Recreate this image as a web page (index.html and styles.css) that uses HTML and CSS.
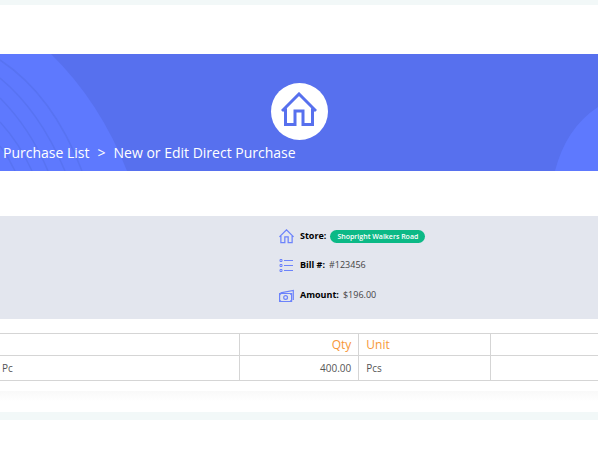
FILE: index.html
```html
<!DOCTYPE html>
<html lang="en">
<head>
<meta charset="utf-8">
<title>New or Edit Direct Purchase</title>
<link rel="stylesheet" href="styles.css">
</head>
<body>
<svg class="sprite" aria-hidden="true">
  <symbol id="home" viewBox="0 0 36 36">
    <path d="M1 19 18 2l17 17M4.500 16.500v16h9.500V19h8v13.500h9.500v-16" fill="none" stroke="currentColor"/>
  </symbol>
</svg>
<main class="page">
  <header class="hero">
    <svg class="swirl swirl-left" width="130" height="117" viewBox="0 0 130 117" aria-hidden="true">
      <path d="M0 0H51Q100 48 127 117H0Z" fill="#5e79fe"/>
      <g fill="none" stroke="#5873f2" stroke-width="1.500">
        <path d="M0 6Q53 41 82 117"/>
        <path d="M0 24Q40 57 65 117"/>
        <path d="M0 44Q30 74 48 117"/>
        <path d="M0 68Q20 90 32 117"/>
        <path d="M0 92Q9 104 15 117"/>
      </g>
    </svg>
    <svg class="swirl swirl-right" width="44" height="64" viewBox="0 0 44 64" aria-hidden="true">
      <path d="M44 0Q12 21 1 64H44Z" fill="#5e79fe"/>
    </svg>
    <div class="badge"><svg class="badge-icon" aria-hidden="true"><use href="#home"/></svg></div>
    <nav class="crumbs" aria-label="Breadcrumb">
      <a href="#list">Purchase List</a><span>&gt;</span><span>New or Edit Direct Purchase</span>
    </nav>
  </header>

  <section class="summary">
    <dl class="facts">
      <div class="fact">
        <svg class="icon icon-home" aria-hidden="true"><use href="#home"/></svg>
        <dt>Store:</dt><dd class="pill">Shopright Walkers Road</dd>
      </div>
      <div class="fact">
        <svg class="icon" viewBox="0 0 15 15" fill="none" stroke="currentColor" aria-hidden="true">
          <path d="M5 2.500h9M5 7.500h9M5 12.500h9" stroke-width="1.200"/>
          <path d="M1 1.500h2v2H1zM1 6.500h2v2H1zM1 11.500h2v2H1z"/>
        </svg>
        <dt>Bill #:</dt><dd>#123456</dd>
      </div>
      <div class="fact">
        <svg class="icon" viewBox="0 0 15 15" fill="none" stroke="currentColor" stroke-width="1.200" aria-hidden="true">
          <path d="M.6 5.500h12v8H.6zM1.500 4.800 14.300 2.500V12"/>
          <circle cx="6.600" cy="9.500" r="1.900"/>
          <path d="M.6 7.500l2-2M.6 11.500l2 2M12.600 7.500l-2-2M12.600 11.500l-2 2" stroke-width=".8"/>
        </svg>
        <dt>Amount:</dt><dd>$196.00</dd>
      </div>
    </dl>
  </section>

  <table class="items">
    <colgroup><col class="col-item"><col class="col-qty"><col class="col-unit"><col></colgroup>
    <thead><tr><th></th><th class="num">Qty</th><th>Unit</th><th></th></tr></thead>
    <tbody><tr><td>Pc</td><td class="num">400.00</td><td>Pcs</td><td></td></tr></tbody>
  </table>
  <div class="shade"></div>
</main>
</body>
</html>
```
FILE: styles.css
```css
* { box-sizing: border-box; }

body {
  margin: 0;
  background: #fff;
  color: #555;
  font-family: "Open Sans", "Noto Sans", sans-serif;
  font-size: 10px;
  line-height: 16px;
}

.sprite { position: absolute; width: 0; height: 0; }

.page {
  border-top: 5px solid #f2f8f8;
  border-bottom: 8px solid #f2f8f8;
  padding: 49px 0 10px;
}

.hero {
  position: relative;
  display: flex;
  flex-direction: column;
  align-items: center;
  padding: 29px 0 8px;
  background: #5770ee;
  color: #fff;
  overflow: hidden;
}

.swirl { position: absolute; bottom: 0; }
.swirl-left { left: 0; }
.swirl-right { right: 0; }

.badge {
  display: flex;
  justify-content: center;
  padding-top: 9px;
  width: 57px;
  height: 57px;
  border-radius: 50%;
  background: #fff;
  color: #5770ee;
}

.badge-icon { width: 36px; height: 36px; stroke-width: 3; }

.crumbs {
  position: relative;
  display: flex;
  gap: 8px;
  align-self: stretch;
  margin-top: 3px;
  padding-left: 3px;
  font-size: 14px;
  line-height: 20px;
}

.crumbs a { color: inherit; text-decoration: none; }

.summary {
  margin-top: 45px;
  padding: 12px 0 16px;
  background: #e3e6ee;
}

.facts {
  display: grid;
  row-gap: 13px;
  margin: 0 0 0 279px;
  font-size: 9px;
}

.fact { display: flex; align-items: center; min-height: 16px; }

.icon { width: 15px; height: 15px; margin-right: 6px; color: #6c83fb; }
.icon-home { stroke-width: 3; }

dt { color: #000; font-weight: 700; }
dd { margin: 0 0 0 4px; color: #444; }

.pill {
  padding: 0 7px;
  border-radius: 7px;
  background: #0cb986;
  color: #fff;
  font-size: 7px;
  font-weight: 600;
  line-height: 13px;
}

.fact:last-child { padding-top: 1px; }

.items {
  width: 100%;
  margin-top: 14px;
  border-collapse: collapse;
  table-layout: fixed;
}

.col-item { width: 40%; }
.col-qty { width: 20%; }
.col-unit { width: 22%; }

th, td {
  padding: 3px 7px;
  border: 1px solid #d5d5d5;
  text-align: left;
}

th {
  color: #f79838;
  font-size: 12px;
  font-weight: 400;
  line-height: 15px;
}

td { line-height: 18px; }

th:first-child, td:first-child { border-left: 0; padding-left: 2px; }
th:last-child, td:last-child { border-right: 0; }
.num { text-align: right; }

.shade {
  height: 11px;
  margin-top: 10px;
  background: linear-gradient(#f9f9f9, #fff);
}
```
